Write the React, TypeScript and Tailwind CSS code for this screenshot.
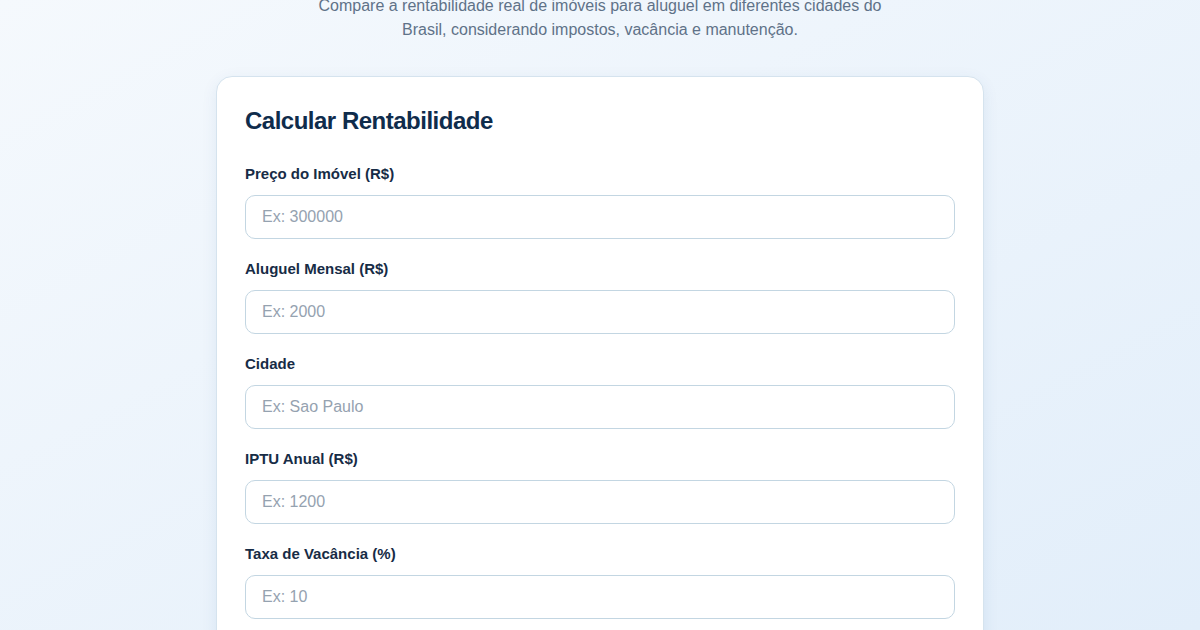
export default function App() {
  const fields = [
    { label: 'Preço do Imóvel (R$)', placeholder: 'Ex: 300000' },
    { label: 'Aluguel Mensal (R$)', placeholder: 'Ex: 2000' },
    { label: 'Cidade', placeholder: 'Ex: Sao Paulo' },
    { label: 'IPTU Anual (R$)', placeholder: 'Ex: 1200' },
    { label: 'Taxa de Vacância (%)', placeholder: 'Ex: 10' },
    { label: 'Manutenção Anual (R$)', placeholder: 'Ex: 1500' },
  ]

  return (
    <div
      className="min-h-screen h-[630px] overflow-hidden bg-gradient-to-br from-[#f5f9fd] to-[#e2eefa]"
      style={{ fontFamily: '"Liberation Sans", Arial, sans-serif' }}
    >
      <p className="mx-auto mt-[-6px] max-w-[600px] text-center text-base leading-6 text-[#5f7288]">
        Compare a rentabilidade real de imóveis para aluguel em diferentes cidades do Brasil, considerando impostos, vacância e manutenção.
      </p>

      <div className="mx-auto mt-[34px] w-[768px] rounded-2xl border border-[#d5e3ee] bg-white px-7 pt-[27px] pb-8 shadow-[0_4px_16px_rgba(30,80,140,0.08)]">
        <h2 className="text-2xl leading-[34px] font-bold tracking-[-0.5px] text-[#0f2c4c]">
          Calcular Rentabilidade
        </h2>

        <div className="mt-[26px] flex flex-col gap-5">
          {fields.map((f) => (
            <div key={f.label} className="flex flex-col gap-[11px]">
              <label className="text-[15px] leading-5 font-bold text-[#172c46]">{f.label}</label>
              <input
                type="text"
                placeholder={f.placeholder}
                className="h-11 w-full rounded-[10px] border border-[#c3d6e2] bg-white px-4 text-base text-[#172c46] placeholder:text-[#95a2b0] outline-none"
              />
            </div>
          ))}
        </div>
      </div>
    </div>
  )
}
